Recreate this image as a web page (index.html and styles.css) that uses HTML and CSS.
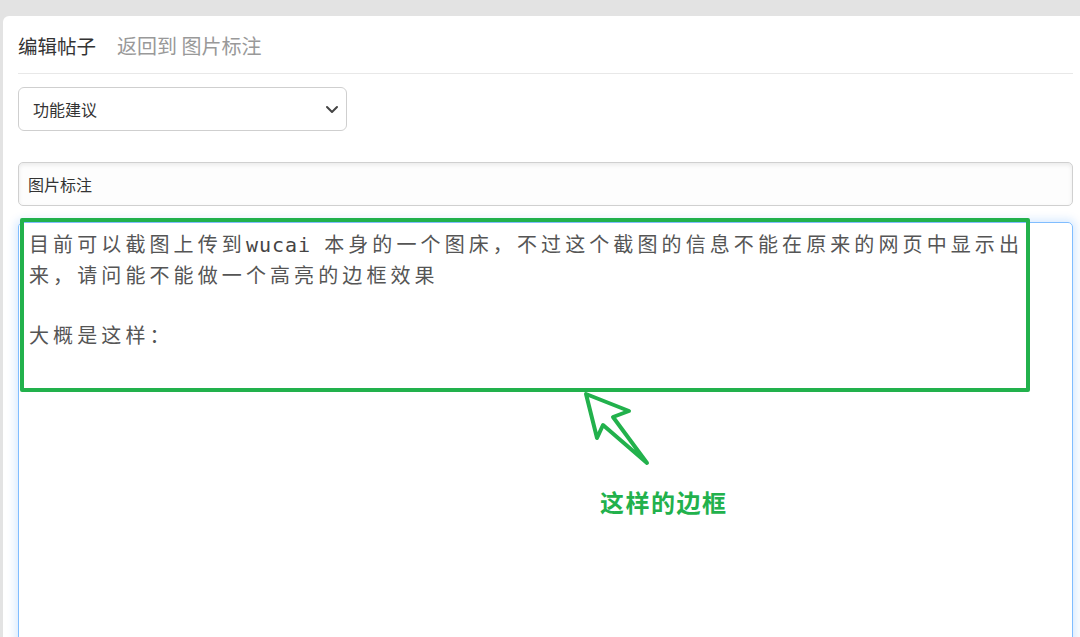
FILE: index.html
```html
<!DOCTYPE html>
<html lang="zh">
<head>
<meta charset="utf-8">
<title>编辑帖子</title>
<link rel="stylesheet" href="styles.css">
</head>
<body>
<div class="card">
  <div class="header">
    <span class="title">编辑帖子</span>
    <a class="back">返回到 图片标注</a>
  </div>
  <div class="select">
    <span>功能建议</span>
    <svg class="chev" width="14" height="9" viewBox="0 0 14 9"><path d="M2 2 L7 7 L12 2" fill="none" stroke="#444" stroke-width="2" stroke-linecap="round" stroke-linejoin="round"/></svg>
  </div>
  <div class="input">图片标注</div>
  <div class="editor">
    <div class="line">目前可以截图上传到<span class="mono">wucai </span>本身的一个图床，不过这个截图的信息不能在原来的网页中显示出</div>
    <div class="line">来，请问能不能做一个高亮的边框效果</div>
    <div class="line">&nbsp;</div>
    <div class="line">大概是这样：</div>
  </div>
  <div class="hl-box"></div>
  <svg class="arrow" width="76" height="82" viewBox="0 0 76 82"><polygon points="6,6 49,23 33,29 67,75 23,37 17,50" fill="none" stroke="#22b14c" stroke-width="4" stroke-linejoin="round" stroke-linecap="round"/></svg>
  <div class="hl-label">这样的边框</div>
</div>
</body>
</html>
```
FILE: styles.css
```css
html, body {
  margin: 0;
  padding: 0;
  height: 100%;
  overflow: hidden;
}
body {
  background: #e3e3e3;
  padding: 16px 0 0 3px;
  box-sizing: border-box;
  font-family: "Noto Sans CJK SC", "Noto Sans", sans-serif;
}
.card {
  position: relative;
  background: #fff;
  border-radius: 6px 0 0 0;
  padding: 0 7px 0 15px;
  height: 100%;
  overflow: hidden;
}
.header {
  display: flex;
  align-items: center;
  gap: 21px;
  padding-top: 1px;
  box-sizing: border-box;
  border-bottom: 1px solid #e8e8e8;
  height: 58px;
}
.title {
  font-size: 19.5px;
  color: #333;
}
.back {
  font-size: 20px;
  color: #999;
}
.select {
  margin-top: 13px;
  width: 329px;
  height: 44px;
  box-sizing: border-box;
  border: 1px solid #cfcfcf;
  border-radius: 6px;
  display: flex;
  align-items: center;
  justify-content: space-between;
  padding: 0 7px 0 14px;
  font-size: 16px;
  color: #333;
}
.chev {
  display: block;
}
.input {
  margin-top: 31px;
  height: 44px;
  box-sizing: border-box;
  border: 1px solid #d0d0d0;
  border-radius: 5px;
  box-shadow: inset 0 2px 4px rgba(0,0,0,0.08);
  background: #fdfdfd;
  display: flex;
  align-items: center;
  padding-left: 9px;
  font-size: 16px;
  color: #333;
}
.editor {
  margin-top: 16px;
  height: 460px;
  box-sizing: border-box;
  border: 1px solid #80bdff;
  border-radius: 5px;
  box-shadow: 0 0 8px 3px rgba(0, 123, 255, 0.15);
  padding: 6px 10px;
  font-size: 20px;
  line-height: 30px;
  letter-spacing: 4.1px;
  color: #555;
  white-space: nowrap;
}
.mono {
  font-family: "DejaVu Sans Mono", monospace;
  letter-spacing: 1px;
  color: #444;
}
.hl-box {
  position: absolute;
  left: 17px;
  top: 202px;
  width: 1010px;
  height: 174px;
  box-sizing: border-box;
  border: 4px solid #22b14c;
  border-radius: 2px;
}
.arrow {
  position: absolute;
  left: 577px;
  top: 372px;
}
.hl-label {
  position: absolute;
  left: 597px;
  top: 468px;
  font-size: 24px;
  font-weight: 700;
  letter-spacing: 1.5px;
  color: #22b14c;
}
```
